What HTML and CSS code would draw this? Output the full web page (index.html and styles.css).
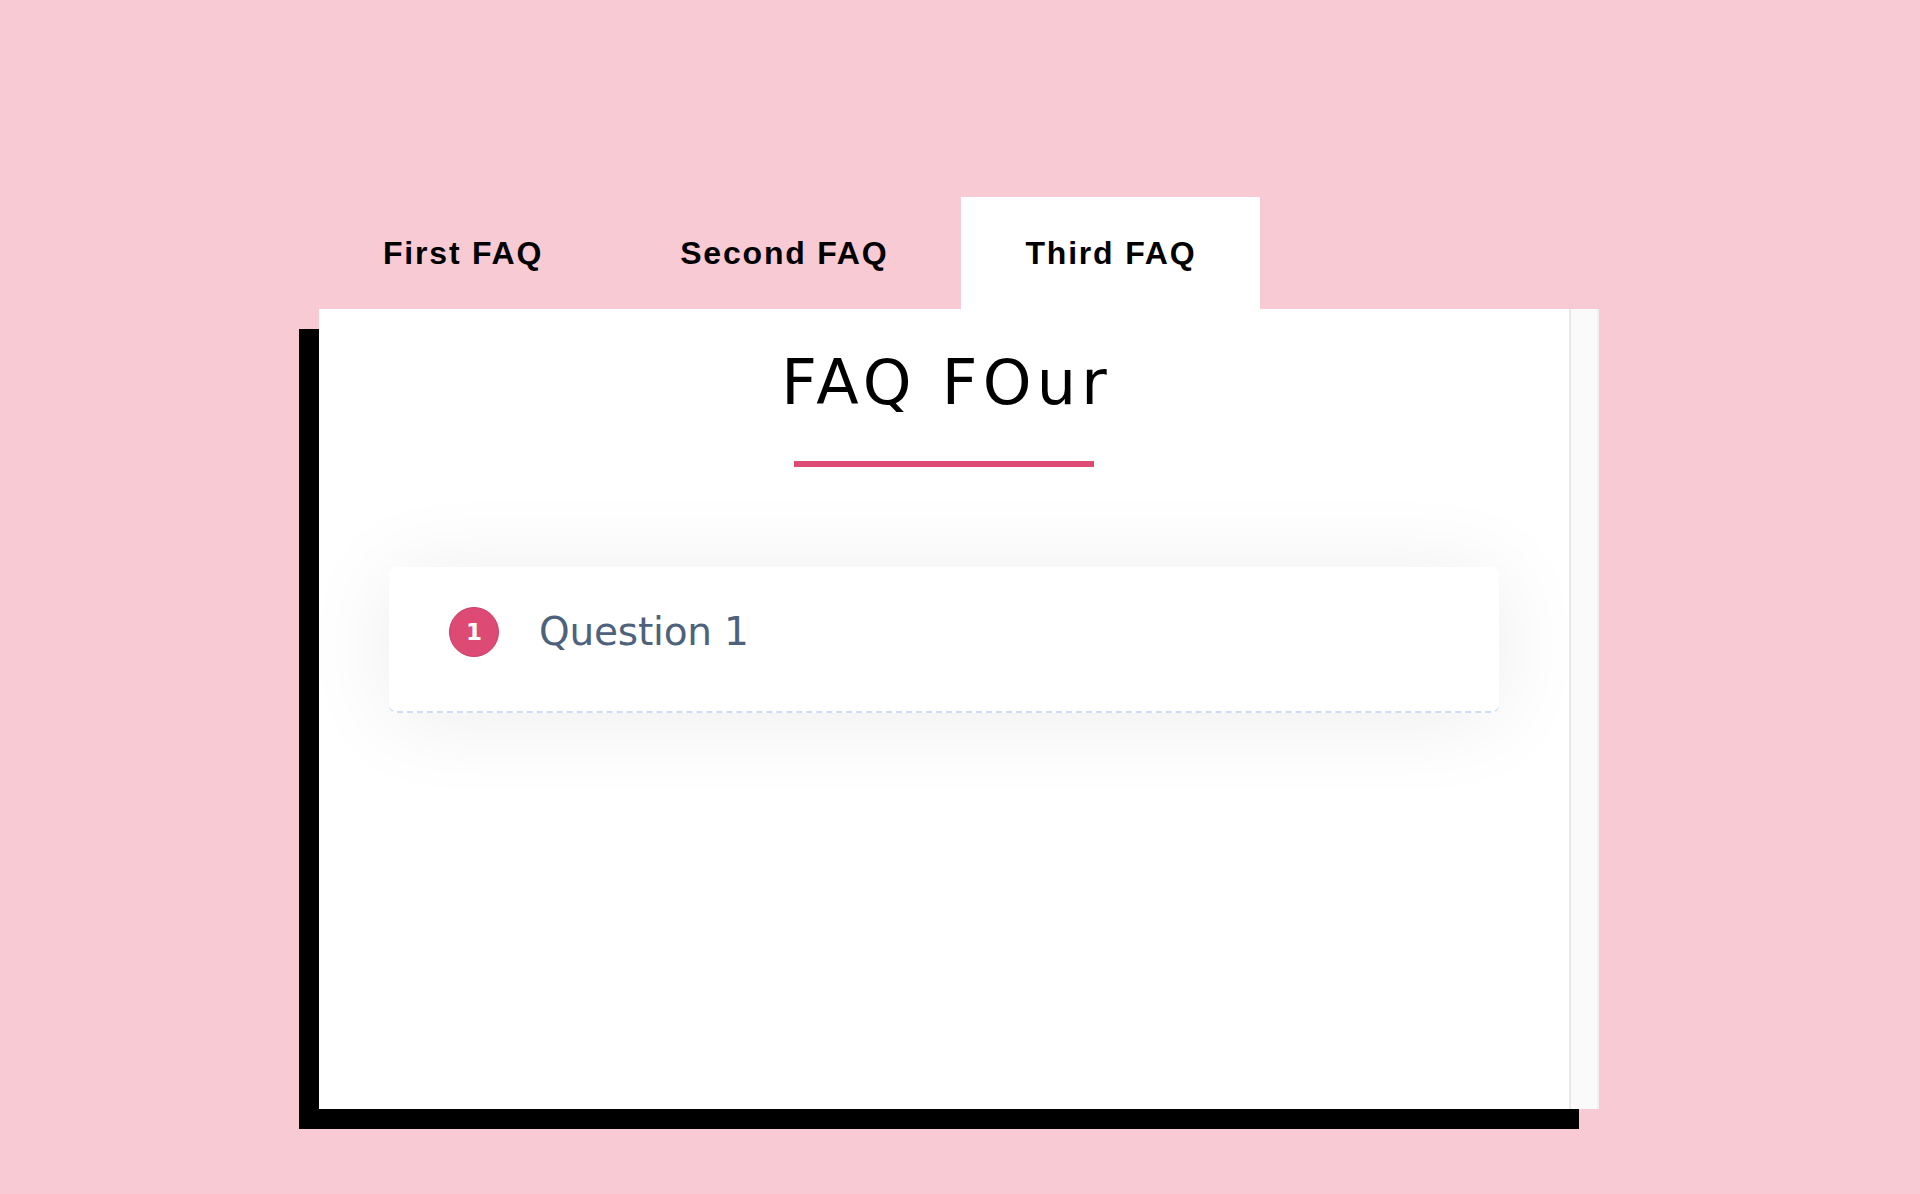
FILE: index.html
```html
<!DOCTYPE html>
<html lang="en">
<head>
<meta charset="utf-8">
<title>FAQ</title>
<link rel="stylesheet" href="styles.css">
</head>
<body>
  <div class="wrap">
    <nav class="tabs">
      <div class="tab">First FAQ</div>
      <div class="tab">Second FAQ</div>
      <div class="tab active">Third FAQ</div>
    </nav>
    <section class="panel">
      <div class="content">
        <h1 class="title">FAQ FOur</h1>
        <div class="rule"></div>
        <div class="card">
          <span class="num">1</span>
          <span class="question">Question 1</span>
        </div>
      </div>
      <div class="track"></div>
    </section>
  </div>
</body>
</html>
```

FILE: styles.css
```css
html, body {
  margin: 0;
  padding: 0;
}

body {
  background: #f8cad3;
  width: 1920px;
  height: 1194px;
  overflow: hidden;
}

.wrap {
  padding: 197px 0 0 319px;
}

.tabs {
  display: flex;
  gap: 9px;
  height: 112px;
}

.tab {
  padding: 0 64px 0 64px;
  line-height: 112px;
  font-family: "Liberation Sans", Arial, sans-serif;
  font-weight: 700;
  font-size: 32px;
  letter-spacing: 1.8px;
  color: #000;
}

.tab.active {
  background: #fff;
}

.panel {
  width: 1280px;
  height: 800px;
  background: #fff;
  box-shadow: -20px 20px 0 #000;
  display: flex;
}

.content {
  flex: 1;
  display: flex;
  flex-direction: column;
  align-items: center;
}

.title {
  margin: 43px 0 0 5px;
  font-family: "DejaVu Sans", sans-serif;
  font-weight: 400;
  font-size: 62px;
  line-height: 1;
  letter-spacing: 5.2px;
  color: #000;
}

.rule {
  width: 300px;
  height: 6px;
  background: #dd4a74;
  margin-top: 47px;
}

.card {
  align-self: stretch;
  margin: 100px 70px 0;
  height: 144px;
  box-sizing: content-box;
  padding: 0 0 0 60px;
  background: #fff;
  border-radius: 8px;
  border-bottom: 2px dashed #cadcf6;
  box-shadow: 0 6px 90px rgba(0, 0, 0, 0.075);
  display: flex;
  align-items: flex-start;
}

.num {
  margin-top: 40px;
  width: 50px;
  height: 50px;
  box-sizing: border-box;
  border-radius: 50%;
  background: #dd4a74;
  border: 1px solid #c9406a;
  color: #fff;
  font-family: "DejaVu Sans", sans-serif;
  font-weight: 700;
  font-size: 23px;
  display: flex;
  align-items: center;
  justify-content: center;
  flex: none;
}

.question {
  margin: 45px 0 0 40px;
  font-family: "DejaVu Sans", sans-serif;
  font-size: 39px;
  line-height: 1;
  color: #4e627b;
  letter-spacing: -0.2px;
}

.track {
  width: 26px;
  flex: none;
  background: #fafafb;
  border-left: 2px solid #e8e8e8;
  border-right: 2px solid #f0f0f0;
}
```
